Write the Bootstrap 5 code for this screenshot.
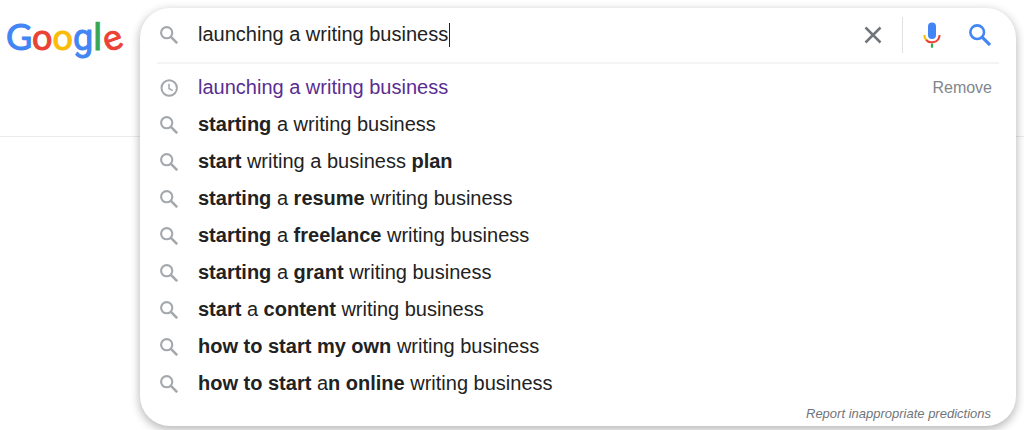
<!DOCTYPE html>
<html lang="en">
<head>
<meta charset="utf-8">
<meta name="viewport" content="width=device-width, initial-scale=1">
<title>Google Search</title>
<link href="https://cdn.jsdelivr.net/npm/bootstrap@5.3.0/dist/css/bootstrap.min.css" rel="stylesheet">
<style>
  body { font-family: "Liberation Sans", Arial, sans-serif; background: #fff; color: #222; }
  .top-bar { height: 137px; border-bottom: 1px solid #ebebeb; }
  .brand { width: 140px; padding: 12px 0 0 6px; font: 400 36px/48px Lato, sans-serif; white-space: nowrap; -webkit-text-stroke: 1px currentColor; }
  .g-blue { color: #4285f4; } .g-red { color: #ea4335; } .g-yellow { color: #fbbc05; } .g-green { color: #34a853; }
  .g-tilt { display: inline-block; transform: rotate(-20deg); }
  .g-round { font-family: Roboto, sans-serif; }
  .search-area { margin: 8px 8px 0 0; }
  .search-panel { border-radius: 30px; background: #fff; box-shadow: 0 3px 9px 1px rgba(32,33,36,.3); }
  .search-row { height: 54px; padding: 0 24px 0 20px; }
  .lead-icon { width: 18px; height: 18px; margin-right: 20px; color: #a3a8ad; flex: none; }
  .query { font-size: 20px; line-height: 22px; width: 252px; padding: 0 0 2px; border: 0; border-right: 1px solid #222; color: #222; background: none; outline: 0; border-radius: 0; }
  .tool { border: 0; background: none; padding: 0; width: 24px; height: 24px; display: flex; align-items: center; justify-content: center; }
  .bar { width: 1px; height: 36px; background: #dfe1e5; margin: 0 17px; }
  .rule { height: 2px; margin: 0 17px; background: #f3f4f5; }
  .suggestions { padding: 5px 24px 0 20px; }
  .suggestions li { height: 37px; }
  .suggestions a { font-size: 20px; line-height: 22px; padding-bottom: 2px; color: #222; text-decoration: none; }
  .suggestions a.visited-query { color: #5a2d91; }
  .remove { font-size: 16px; line-height: 20px; color: #80868b; }
  .report { padding: 3px 25px 4px; font-size: 13px; line-height: 17px; }
  .report a { color: #70757a; font-style: italic; text-decoration: none; }
</style>
</head>
<body class="min-vh-100">
<svg class="d-none" aria-hidden="true">
  <symbol id="lens" viewBox="0 0 18 18"><circle cx="6.7" cy="6.7" r="5.6" fill="none" stroke="currentColor" stroke-width="2.1"/><path d="M10.7 10.7 17.200 17.200" fill="none" stroke="currentColor" stroke-width="2.6"/></symbol>
  <symbol id="clock" viewBox="0 0 18 18"><circle cx="9.2" cy="9" r="7.7" fill="none" stroke="currentColor" stroke-width="2"/><path d="M9 4.7v4.8l3.7 2.1" fill="none" stroke="currentColor" stroke-width="1.500"/></symbol>
</svg>
<header class="top-bar d-flex">
  <a class="brand text-decoration-none" href="#" aria-label="Google"><span class="g-blue">G</span><span class="g-red">o</span><span class="g-yellow">o</span><span class="g-blue g-round">g</span><span class="g-green g-round">l</span><span class="g-red g-tilt">e</span></a>
  <div class="search-area position-relative flex-grow-1">
    <form class="search-panel position-absolute top-0 start-0 end-0">
      <div class="search-row d-flex align-items-center">
        <svg class="lead-icon" aria-hidden="true"><use href="#lens"/></svg>
        <input class="query" type="text" aria-label="Search" value="launching a writing business">
        <button class="tool ms-auto" type="button" aria-label="Clear"><svg width="18" height="18" viewBox="0 0 18 18"><path d="m1.5 1.5 15 15m0-15-15 15" stroke="#70757a" stroke-width="2.5"/></svg></button>
        <span class="bar"></span>
        <button class="tool me-4" type="button" aria-label="Search by voice"><svg width="18" height="26" viewBox="0 0 18 26"><rect x="5" y=".5" width="8" height="16.5" rx="4" fill="#4285f4"/><path d="M1.4 13c0 2.5 1 4.400 2.500 5.500" fill="none" stroke="#fbbc05" stroke-width="2"/><path d="M3.200 18c3 3.600 13 3.600 13.400-5" fill="none" stroke="#ea4335" stroke-width="2"/><path d="M9 21.500v4.200" stroke="#34a853" stroke-width="2.200"/></svg></button>
        <button class="tool g-blue" type="submit" aria-label="Google Search"><svg width="22" height="22"><use href="#lens"/></svg></button>
      </div>
      <div class="rule"></div>
      <ul class="suggestions list-unstyled mb-0">
        <li class="d-flex align-items-center"><svg class="lead-icon" aria-hidden="true"><use href="#clock"/></svg><a class="visited-query" href="#">launching a writing business</a><button class="remove btn btn-link border-0 p-0 ms-auto text-decoration-none" type="button">Remove</button></li>
        <li class="d-flex align-items-center"><svg class="lead-icon" aria-hidden="true"><use href="#lens"/></svg><a href="#"><b>starting</b> a writing business</a></li>
        <li class="d-flex align-items-center"><svg class="lead-icon" aria-hidden="true"><use href="#lens"/></svg><a href="#"><b>start</b> writing a business <b>plan</b></a></li>
        <li class="d-flex align-items-center"><svg class="lead-icon" aria-hidden="true"><use href="#lens"/></svg><a href="#"><b>starting</b> a <b>resume</b> writing business</a></li>
        <li class="d-flex align-items-center"><svg class="lead-icon" aria-hidden="true"><use href="#lens"/></svg><a href="#"><b>starting</b> a <b>freelance</b> writing business</a></li>
        <li class="d-flex align-items-center"><svg class="lead-icon" aria-hidden="true"><use href="#lens"/></svg><a href="#"><b>starting</b> a <b>grant</b> writing business</a></li>
        <li class="d-flex align-items-center"><svg class="lead-icon" aria-hidden="true"><use href="#lens"/></svg><a href="#"><b>start</b> a <b>content</b> writing business</a></li>
        <li class="d-flex align-items-center"><svg class="lead-icon" aria-hidden="true"><use href="#lens"/></svg><a href="#"><b>how to start my own</b> writing business</a></li>
        <li class="d-flex align-items-center"><svg class="lead-icon" aria-hidden="true"><use href="#lens"/></svg><a href="#"><b>how to start</b> a<b>n online</b> writing business</a></li>
      </ul>
      <div class="report text-end"><a href="#">Report inappropriate predictions</a></div>
    </form>
  </div>
</header>
<script src="https://cdn.jsdelivr.net/npm/bootstrap@5.3.0/dist/js/bootstrap.bundle.min.js"></script>
</body>
</html>
